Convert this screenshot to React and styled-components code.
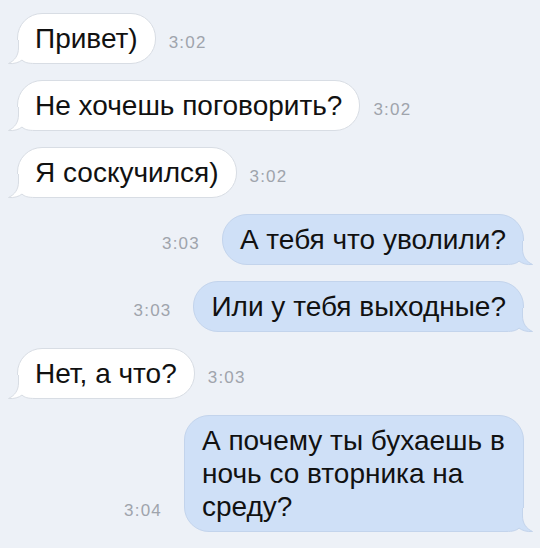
import React from "react";
import styled, { createGlobalStyle } from "styled-components";

const PAGE_BG = "#edf1f7";

const GlobalStyle = createGlobalStyle`
  html, body {
    margin: 0;
    padding: 0;
    background: ${PAGE_BG};
  }
  body {
    font-family: "Liberation Sans", Arial, sans-serif;
  }
`;

const Chat = styled.div`
  width: 540px;
  height: 548px;
  box-sizing: border-box;
  padding: 13px 16px 0 17px;
  display: flex;
  flex-direction: column;
  gap: 16px;
  overflow: hidden;
`;

const Row = styled.div`
  display: flex;
  align-items: last baseline;
  justify-content: ${(p) => (p.$out ? "flex-end" : "flex-start")};
  gap: ${(p) => (p.$out ? "22px" : "13px")};
`;

const Bubble = styled.div`
  position: relative;
  box-sizing: border-box;
  max-width: ${(p) => p.$max || "400px"};
  padding: 8px 17px;
  font-size: 28px;
  line-height: 33px;
  color: #111;
  background: ${(p) => (p.$out ? "#cfe0f7" : "#ffffff")};
  border: 1px solid ${(p) => (p.$out ? "#c3d4ec" : "#d8dde4")};
  border-radius: 25px;
  ${(p) =>
    p.$out ? "border-bottom-right-radius: 0;" : "border-bottom-left-radius: 0;"}
`;

const Tail = styled.svg`
  position: absolute;
  bottom: -1px;
  ${(p) => (p.$out ? "right: -11px; transform: scaleX(-1);" : "left: -11px;")}
  width: 28px;
  height: 24px;
  overflow: visible;
`;

const Time = styled.span`
  font-size: 17px;
  letter-spacing: 1.2px;
  color: #9fa4ac;
  white-space: nowrap;
`;

const outline =
  "M 11.5 0 L 11.5 8 C 11.5 15, 8 20.5, 1.5 23.5 C 7 24, 12 22.5, 15 20 C 17.5 22.5, 21 23.5, 28 23.5";

function BubbleTail({ out }) {
  const fill = out ? "#cfe0f7" : "#ffffff";
  const stroke = out ? "#c3d4ec" : "#d8dde4";
  return (
    <Tail $out={out} viewBox="0 0 28 24">
      <rect x="0" y="0" width="28" height="24" fill={PAGE_BG} />
      <path d={outline + " L 28 0 Z"} fill={fill} />
      <path d={outline} fill="none" stroke={stroke} strokeWidth="1" />
    </Tail>
  );
}

const messages = [
  { out: false, text: "Привет)", time: "3:02" },
  { out: false, text: "Не хочешь поговорить?", time: "3:02" },
  { out: false, text: "Я соскучился)", time: "3:02" },
  { out: true, text: "А тебя что уволили?", time: "3:03" },
  { out: true, text: "Или у тебя выходные?", time: "3:03" },
  { out: false, text: "Нет, а что?", time: "3:03" },
  {
    out: true,
    text: "А почему ты бухаешь в ночь со вторника на среду?",
    time: "3:04",
    max: "340px",
  },
];

function Message({ out, text, time, max }) {
  return (
    <Row $out={out}>
      {out && <Time>{time}</Time>}
      <Bubble $out={out} $max={max}>
        {text}
        <BubbleTail out={out} />
      </Bubble>
      {!out && <Time>{time}</Time>}
    </Row>
  );
}

export default function App() {
  return (
    <>
      <GlobalStyle />
      <Chat>
        {messages.map((m, i) => (
          <Message key={i} {...m} />
        ))}
      </Chat>
    </>
  );
}
